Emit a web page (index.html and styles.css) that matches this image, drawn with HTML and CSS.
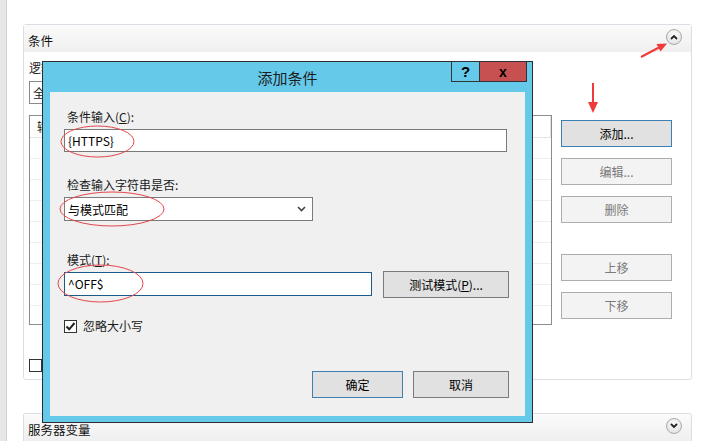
FILE: index.html
```html
<!DOCTYPE html>
<html lang="zh-CN">
<head>
    <meta charset="UTF-8">
    <title>添加条件</title>
    <link rel="stylesheet" href="styles.css">
</head>
<body>
    <div class="screen">
        <div class="side"></div>
        <div class="main">
            <section class="panel panel-open">
                <div class="panel-head">
                    <span>条件</span>
                    <span class="fold">
                        <svg width="8" height="6" viewBox="0 0 8 6"><path d="M1 5 L4 2 L7 5" fill="none" stroke="#222" stroke-width="1.8"/></svg>
                    </span>
                </div>
                <div class="panel-body">
                    <div class="field-label">逻辑分组(K):</div>
                    <div class="combo">全部匹配</div>
                    <div class="cond-row">
                        <div class="grid">
                            <div class="grid-head">
                                <span class="col-input">输入</span>
                                <span class="col-type">类型</span>
                                <span class="col-pattern">模式</span>
                            </div>
                            <div class="grid-row"></div>
                            <div class="grid-row"></div>
                            <div class="grid-row"></div>
                            <div class="grid-row"></div>
                            <div class="grid-row"></div>
                            <div class="grid-row"></div>
                            <div class="grid-row"></div>
                            <div class="grid-row"></div>
                        </div>
                        <div class="actions">
                            <button class="btn btn-primary">添加...</button>
                            <button class="btn btn-off gap-s">编辑...</button>
                            <button class="btn btn-off gap-s">删除</button>
                            <button class="btn btn-off gap-l">上移</button>
                            <button class="btn btn-off gap-s">下移</button>
                        </div>
                    </div>
                    <div class="track">
                        <span class="track-box"></span>
                        <span>跟踪条件之间的捕获组</span>
                    </div>
                </div>
            </section>
            <section class="panel panel-closed">
                <div class="panel-head">
                    <span>服务器变量</span>
                    <span class="fold">
                        <svg width="8" height="6" viewBox="0 0 8 6"><path d="M1 1 L4 4 L7 1" fill="none" stroke="#222" stroke-width="1.8"/></svg>
                    </span>
                </div>
            </section>
        </div>
    </div>

    <div class="dialog">
        <div class="dialog-title">添加条件</div>
        <div class="caption-btns">
            <span class="cap-help">?</span>
            <span class="cap-close">x</span>
        </div>
        <div class="dialog-body">
            <div class="lbl">条件输入(<u>C</u>):</div>
            <div class="text-box box-wide">{HTTPS}</div>
            <div class="lbl lbl-2">检查输入字符串是否:</div>
            <div class="text-box box-select">
                <span>与模式匹配</span>
                <svg width="9" height="6" viewBox="0 0 9 6"><path d="M1 1 L4.5 4.5 L8 1" fill="none" stroke="#444" stroke-width="1.6"/></svg>
            </div>
            <div class="lbl lbl-3">模式(<u>T</u>):</div>
            <div class="pattern-row">
                <div class="text-box box-pattern">^OFF$</div>
                <button class="dlg-btn btn-test">测试模式(<u>P</u>)...</button>
            </div>
            <div class="check-row">
                <span class="check-box">
                    <svg width="11" height="11" viewBox="0 0 11 11"><path d="M1.5 5.5 L4.2 8.3 L9.5 2" fill="none" stroke="#222" stroke-width="2"/></svg>
                </span>
                <span>忽略大小写</span>
            </div>
            <div class="dialog-foot">
                <button class="dlg-btn btn-ok">确定</button>
                <button class="dlg-btn btn-cancel">取消</button>
            </div>
        </div>
    </div>

    <svg class="marks" width="702" height="441" viewBox="0 0 702 441">
        <g fill="none" stroke="#e4464b" stroke-width="1">
            <ellipse cx="97.5" cy="141.5" rx="36.5" ry="15.5"/>
            <ellipse cx="112" cy="209" rx="52" ry="17"/>
            <ellipse cx="100.5" cy="283.5" rx="42.5" ry="18.5"/>
        </g>
        <g stroke="#f03a3a" stroke-width="2" fill="#f03a3a">
            <line x1="641" y1="57" x2="659" y2="47.5"/>
            <polygon points="667,43.5 656.5,44 660.5,51.5" stroke="none"/>
            <line x1="593" y1="83" x2="593" y2="104"/>
            <polygon points="593,113 588,102 598,102" stroke="none"/>
        </g>
    </svg>
</body>
</html>
```

FILE: styles.css
```css
body {
    margin: 0;
    width: 702px;
    height: 441px;
    overflow: hidden;
    background-color: #fff;
    font-family: "Noto Sans CJK SC", "Liberation Sans", sans-serif;
    font-size: 12px;
    color: #1a1a1a;
    position: relative;
}
button {
    font-family: inherit;
    font-size: 12px;
    padding: 0;
    box-sizing: border-box;
}
.screen {
    display: flex;
    height: 441px;
    overflow: hidden;
}
.side {
    width: 6px;
    background-color: #e7e7e7;
    border-right: 1px solid #d2d2d2;
}
.main {
    padding: 24px 0 0 16px;
}

/* panels */
.panel {
    width: 669px;
    box-sizing: border-box;
    border: 1px solid #d9dfe5;
    border-radius: 3px;
    background-color: #fff;
}
.panel-open {
    height: 356px;
}
.panel-closed {
    margin-top: 33px;
    height: 28px;
    border-bottom: 0;
    border-radius: 3px 3px 0 0;
}
.panel-head {
    height: 27px;
    padding: 3px 9px 0 4px;
    box-sizing: border-box;
    display: flex;
    align-items: center;
    justify-content: space-between;
    background: linear-gradient(#fbfbfb, #efefef);
    font-size: 12.5px;
    color: #111;
}
.fold {
    width: 14px;
    height: 14px;
    margin-top: -6px;
    border: 1px solid #a9a9a9;
    border-radius: 50%;
    background: radial-gradient(circle at 50% 35%, #fdfdfd, #dcdcdc);
    display: flex;
    align-items: center;
    justify-content: center;
}
.panel-body {
    padding: 8px 19px 0 5px;
}
.field-label {
    line-height: 16px;
}
.combo {
    margin-top: 5px;
    width: 230px;
    height: 23px;
    box-sizing: border-box;
    border: 1px solid #8a8a8a;
    padding-left: 3px;
    line-height: 21px;
}
.cond-row {
    margin-top: 11px;
    display: flex;
    gap: 9px;
}
.grid {
    width: 524px;
    height: 210px;
    box-sizing: border-box;
    border: 1px solid #8c8c8c;
    overflow: hidden;
}
.grid-head {
    height: 22px;
    display: flex;
    border-bottom: 1px solid #e3e3e3;
    box-sizing: border-box;
}
.grid-head span {
    padding-left: 7px;
    line-height: 21px;
    border-right: 1px solid #e3e3e3;
}
.col-input {
    width: 170px;
}
.col-type {
    width: 150px;
}
.col-pattern {
    width: 190px;
}
.grid-row {
    height: 21px;
    box-sizing: border-box;
    border-bottom: 1px solid #efefef;
}
.actions {
    display: flex;
    flex-direction: column;
    padding-top: 5px;
}
.btn {
    width: 111px;
    height: 27px;
    border: 1px solid #adadad;
}
.btn-primary {
    background-color: #e1e1e1;
    border-color: #3c7fb1;
    color: #000;
}
.btn-off {
    background-color: #f3f3f3;
    color: #7a7a7a;
}
.gap-s {
    margin-top: 11px;
}
.gap-l {
    margin-top: 31px;
}
.track {
    margin-top: 32px;
    display: flex;
    align-items: center;
    gap: 5px;
}
.track-box {
    width: 13px;
    height: 13px;
    box-sizing: border-box;
    border: 1px solid #333;
    background-color: #fff;
}

/* dialog */
.dialog {
    position: absolute;
    left: 42px;
    top: 61px;
    width: 491px;
    height: 362px;
    box-sizing: border-box;
    border: 1px solid #2d2d2d;
    background-color: #65c9ea;
    padding: 0 7px 6px 7px;
    display: flex;
    flex-direction: column;
}
.dialog-title {
    height: 30px;
    display: flex;
    align-items: center;
    justify-content: center;
    font-size: 15px;
    color: #1e1e1e;
}
.caption-btns {
    position: absolute;
    top: -1px;
    right: 5px;
    display: flex;
}
.cap-help,
.cap-close {
    height: 21px;
    box-sizing: border-box;
    border: 1px solid #333;
    display: flex;
    align-items: center;
    justify-content: center;
    font-family: "Liberation Sans", sans-serif;
    font-weight: bold;
    color: #000;
}
.cap-help {
    width: 29px;
    font-size: 15px;
}
.cap-close {
    width: 47px;
    border-left: 0;
    background-color: #c75050;
    font-size: 14px;
}
.dialog-body {
    flex: 1;
    background-color: #f0f0f0;
    padding: 17px 16px 18px 14px;
    display: flex;
    flex-direction: column;
    align-items: flex-start;
}
.lbl {
    margin-left: 3px;
    line-height: 16px;
}
.lbl-2 {
    margin-top: 25px;
}
.lbl-3 {
    margin-top: 31px;
}
.text-box {
    margin-top: 4px;
    box-sizing: border-box;
    border: 1px solid #7a7a7a;
    background-color: #fff;
    padding-left: 3px;
    color: #000;
}
.box-wide {
    width: 443px;
    height: 23px;
    line-height: 21px;
}
.box-select {
    width: 249px;
    height: 24px;
    display: flex;
    align-items: center;
    justify-content: space-between;
    padding-right: 6px;
}
.pattern-row {
    margin-top: 3px;
    display: flex;
    gap: 11px;
}
.box-pattern {
    margin-top: 1px;
    width: 308px;
    height: 24px;
    line-height: 22px;
    border-color: #1d5a8a;
}
.dlg-btn {
    height: 27px;
    background-color: #e1e1e1;
    border: 1px solid #7a7a7a;
    color: #000;
}
.btn-test {
    width: 126px;
}
.check-row {
    margin-top: 20px;
    display: flex;
    align-items: center;
    gap: 6px;
    line-height: 16px;
}
.check-box {
    width: 13px;
    height: 13px;
    box-sizing: border-box;
    border: 1px solid #333;
    background-color: #fff;
    display: flex;
    align-items: center;
    justify-content: center;
}
.dialog-foot {
    margin-top: auto;
    align-self: flex-end;
    display: flex;
    gap: 10px;
}
.btn-ok {
    width: 91px;
    border-color: #3c7fb1;
}
.btn-cancel {
    width: 96px;
}

.marks {
    position: absolute;
    left: 0;
    top: 0;
    pointer-events: none;
}
```
